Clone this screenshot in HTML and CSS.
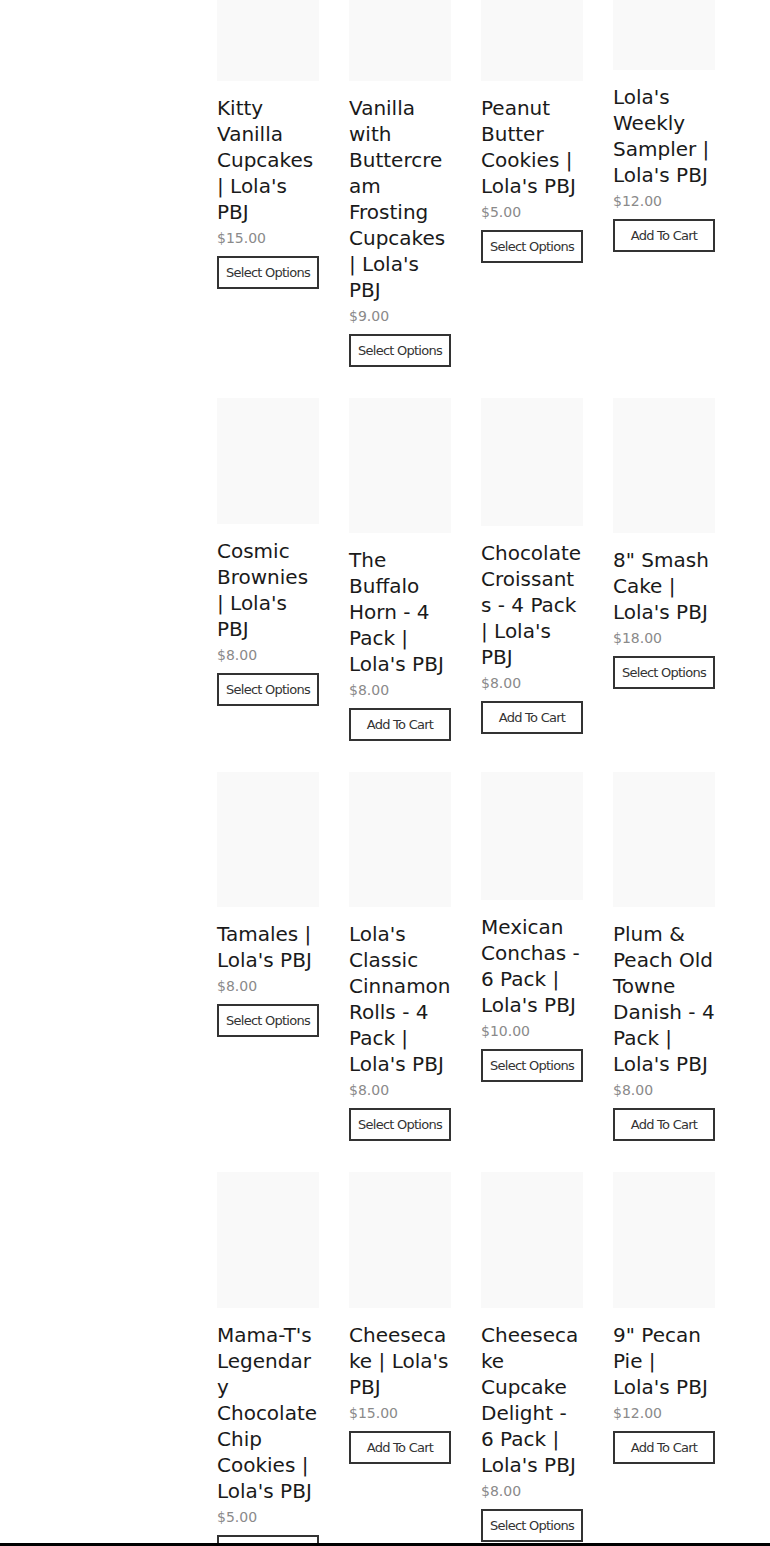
FILE: index.html
```html
<!DOCTYPE html>
<html lang="en">
<head>
<meta charset="utf-8">
<title>Lola's PBJ – Products</title>
<link rel="stylesheet" href="styles.css">
</head>
<body>
<main class="shop">
  <ul class="grid">
    <li class="card">
      <div class="thumb" style="height:81px"></div>
      <h3 class="title">Kitty Vanilla Cupcakes | Lola's PBJ</h3>
      <p class="price">$15.00</p>
      <button class="btn btn-options">Select Options</button>
    </li>
    <li class="card">
      <div class="thumb" style="height:81px"></div>
      <h3 class="title">Vanilla with Buttercream Frosting Cupcakes | Lola's PBJ</h3>
      <p class="price">$9.00</p>
      <button class="btn btn-options">Select Options</button>
    </li>
    <li class="card">
      <div class="thumb" style="height:81px"></div>
      <h3 class="title">Peanut Butter Cookies | Lola's PBJ</h3>
      <p class="price">$5.00</p>
      <button class="btn btn-options">Select Options</button>
    </li>
    <li class="card">
      <div class="thumb" style="height:70px"></div>
      <h3 class="title">Lola's Weekly Sampler | Lola's PBJ</h3>
      <p class="price">$12.00</p>
      <button class="btn btn-cart">Add To Cart</button>
    </li>

    <li class="card">
      <div class="thumb" style="height:126px"></div>
      <h3 class="title">Cosmic Brownies | Lola's PBJ</h3>
      <p class="price">$8.00</p>
      <button class="btn btn-options">Select Options</button>
    </li>
    <li class="card">
      <div class="thumb" style="height:135px"></div>
      <h3 class="title">The Buffalo Horn - 4 Pack | Lola's PBJ</h3>
      <p class="price">$8.00</p>
      <button class="btn btn-cart">Add To Cart</button>
    </li>
    <li class="card">
      <div class="thumb" style="height:128px"></div>
      <h3 class="title">Chocolate Croissants - 4 Pack | Lola's PBJ</h3>
      <p class="price">$8.00</p>
      <button class="btn btn-cart">Add To Cart</button>
    </li>
    <li class="card">
      <div class="thumb" style="height:135px"></div>
      <h3 class="title">8" Smash Cake | Lola's PBJ</h3>
      <p class="price">$18.00</p>
      <button class="btn btn-options">Select Options</button>
    </li>

    <li class="card">
      <div class="thumb" style="height:135px"></div>
      <h3 class="title">Tamales | Lola's PBJ</h3>
      <p class="price">$8.00</p>
      <button class="btn btn-options">Select Options</button>
    </li>
    <li class="card">
      <div class="thumb" style="height:135px"></div>
      <h3 class="title">Lola's Classic Cinnamon Rolls - 4 Pack | Lola's PBJ</h3>
      <p class="price">$8.00</p>
      <button class="btn btn-options">Select Options</button>
    </li>
    <li class="card">
      <div class="thumb" style="height:128px"></div>
      <h3 class="title">Mexican Conchas - 6 Pack | Lola's PBJ</h3>
      <p class="price">$10.00</p>
      <button class="btn btn-options">Select Options</button>
    </li>
    <li class="card">
      <div class="thumb" style="height:135px"></div>
      <h3 class="title">Plum &amp; Peach Old Towne Danish - 4 Pack | Lola's PBJ</h3>
      <p class="price">$8.00</p>
      <button class="btn btn-cart">Add To Cart</button>
    </li>

    <li class="card">
      <div class="thumb" style="height:136px"></div>
      <h3 class="title">Mama-T's Legendary Chocolate Chip Cookies | Lola's PBJ</h3>
      <p class="price">$5.00</p>
      <button class="btn btn-options">Select Options</button>
    </li>
    <li class="card">
      <div class="thumb" style="height:136px"></div>
      <h3 class="title">Cheesecake | Lola's PBJ</h3>
      <p class="price">$15.00</p>
      <button class="btn btn-cart">Add To Cart</button>
    </li>
    <li class="card">
      <div class="thumb" style="height:136px"></div>
      <h3 class="title">Cheesecake Cupcake Delight - 6 Pack | Lola's PBJ</h3>
      <p class="price">$8.00</p>
      <button class="btn btn-options">Select Options</button>
    </li>
    <li class="card">
      <div class="thumb" style="height:136px"></div>
      <h3 class="title">9" Pecan Pie | Lola's PBJ</h3>
      <p class="price">$12.00</p>
      <button class="btn btn-cart">Add To Cart</button>
    </li>
  </ul>
</main>
<div class="bottom-rule"></div>
</body>
</html>
```

FILE: styles.css
```css
html, body {
  margin: 0;
  padding: 0;
  background: #ffffff;
}

body {
  font-family: "DejaVu Sans", "Liberation Sans", sans-serif;
  color: #1c1d1d;
}

.shop {
  padding-left: 217px;
}

.grid {
  list-style: none;
  margin: 0;
  padding: 0;
  display: grid;
  grid-template-columns: repeat(4, 102px);
  column-gap: 30px;
  row-gap: 31px;
  align-items: start;
}

.card {
  display: flex;
  flex-direction: column;
  align-items: stretch;
}

.thumb {
  background: #f9f9f9;
  width: 102px;
}

.title {
  margin: 14px 0 0;
  font-size: 20px;
  font-weight: 400;
  line-height: 26px;
  color: #1a1a1a;
  overflow-wrap: break-word;
  word-break: normal;
}

.price {
  margin: 0;
  font-size: 14px;
  line-height: 26px;
  color: #8a8a8a;
}

.btn {
  margin-top: 5px;
  height: 33px;
  width: 102px;
  box-sizing: border-box;
  border: 2px solid #333333;
  background: #ffffff;
  color: #333333;
  font-family: "DejaVu Sans", sans-serif;
  font-size: 13px;
  letter-spacing: -0.75px;
  padding: 0;
  text-align: center;
  cursor: pointer;
}

.bottom-rule {
  position: fixed;
  left: 0;
  right: 0;
  bottom: 0;
  height: 3px;
  background: #000000;
}
```
